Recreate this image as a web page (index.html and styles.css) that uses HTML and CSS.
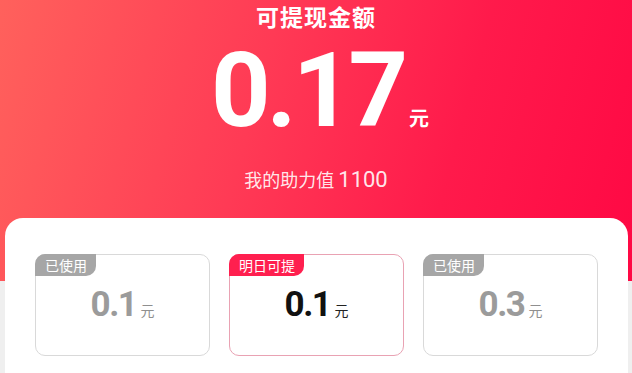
FILE: index.html
```html
<!DOCTYPE html>
<html lang="zh-CN">
<head>
<meta charset="utf-8">
<title>可提现金额</title>
<link rel="stylesheet" href="styles.css">
</head>
<body>
<div class="hero">
  <div class="title">可提现金额</div>
  <div class="amount"><span class="num">0.17</span><span class="unit">元</span></div>
  <div class="power">我的助力值 <span class="power-num">1100</span></div>
</div>
<div class="panel">
  <div class="cards">
    <div class="card">
      <div class="badge">已使用</div>
      <div class="value"><span class="vnum">0.1</span><span class="vunit">元</span></div>
    </div>
    <div class="card card-active">
      <div class="badge">明日可提</div>
      <div class="value"><span class="vnum">0.1</span><span class="vunit">元</span></div>
    </div>
    <div class="card">
      <div class="badge">已使用</div>
      <div class="value"><span class="vnum">0.3</span><span class="vunit">元</span></div>
    </div>
  </div>
</div>
</body>
</html>
```
FILE: styles.css
```css
html, body {
  margin: 0;
  padding: 0;
}
body {
  width: 632px;
  height: 373px;
  overflow: hidden;
  font-family: "Noto Sans CJK SC", "Noto Sans", sans-serif;
  background:
    linear-gradient(105deg, #ff615c 0%, #ff3a55 40%, #ff1a4b 70%, #ff0844 100%) top left / 100% 281px no-repeat,
    #efefef;
}
.hero {
  padding-top: 3px;
  color: #fff;
  text-align: center;
}
.title {
  font-size: 23px;
  line-height: 27px;
  font-weight: 700;
  letter-spacing: 1px;
}
.amount {
  margin-top: 9px;
  display: flex;
  justify-content: center;
  align-items: baseline;
  padding-left: 8px;
}
.num {
  font-family: Roboto, "Liberation Sans", sans-serif;
  font-weight: 700;
  font-size: 104px;
  line-height: 1;
  letter-spacing: -4px;
}
.unit {
  font-family: "Noto Sans CJK SC", sans-serif;
  font-size: 20px;
  line-height: 1;
  font-weight: 700;
  margin-left: 5px;
}
.power {
  margin-top: 26px;
  font-size: 18px;
  line-height: 20px;
  color: rgba(255, 255, 255, 0.9);
}
.power-num {
  font-family: Roboto, "Liberation Sans", sans-serif;
  font-size: 22px;
}
.panel {
  margin: 28px 4px 0 5px;
  background: #fff;
  border-radius: 18px 18px 0 0;
  padding: 36px 30px 18px;
}
.cards {
  display: grid;
  grid-template-columns: repeat(3, 1fr);
  gap: 19px;
}
.card {
  box-sizing: border-box;
  height: 102px;
  border: 1px solid #d9d9d9;
  border-radius: 10px;
  background: #fff;
  display: flex;
  flex-direction: column;
  align-items: center;
}
.badge {
  align-self: flex-start;
  margin: -1px 0 0 -1px;
  height: 22px;
  padding: 0 9px 0 10px;
  font-size: 14px;
  line-height: 23px;
  color: #fff;
  background: #a6a6a6;
  border-radius: 10px 0 10px 0;
}
.value {
  margin-top: 11px;
  display: flex;
  align-items: baseline;
  color: #9b9b9b;
}
.vnum {
  font-family: Roboto, "Liberation Sans", sans-serif;
  font-weight: 700;
  font-size: 35px;
  line-height: 1;
  letter-spacing: -1.5px;
}
.vunit {
  font-size: 14px;
  line-height: 1;
  margin-left: 4px;
  color: #8f8f8f;
}
.card-active {
  border-color: #e9a2b3;
}
.card-active .badge {
  background: #ff1f4f;
}
.card-active .value {
  color: #111;
}
.card-active .vunit {
  color: #222;
}
```
